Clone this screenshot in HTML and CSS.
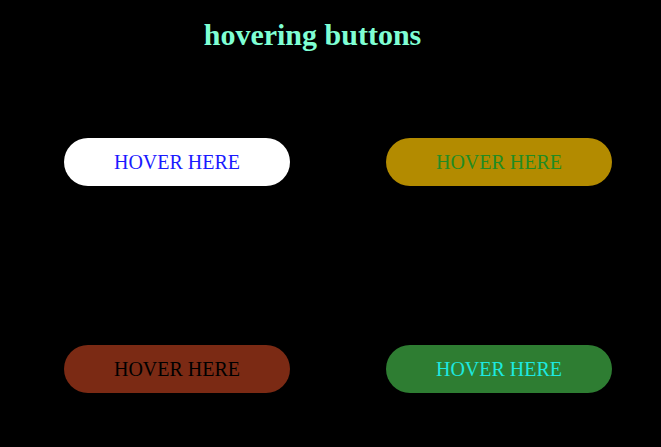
FILE: index.html
```html
<!DOCTYPE html>
<html>
<head>
<meta charset="utf-8">
<link rel="stylesheet" href="styles.css">
</head>
<body>
<h1 class="title">hovering buttons</h1>
<div class="grid">
  <button class="btn btn-white">HOVER HERE</button>
  <button class="btn btn-gold">HOVER HERE</button>
  <button class="btn btn-brown">HOVER HERE</button>
  <button class="btn btn-green">HOVER HERE</button>
</div>
</body>
</html>
```
FILE: styles.css
```css
html, body {
  margin: 0;
  padding: 0;
  background: #000;
  width: 661px;
  height: 447px;
  overflow: hidden;
  font-family: "Liberation Serif", serif;
}
.title {
  margin: 0;
  padding-top: 17px;
  width: 625px;
  text-align: center;
  color: #7fffd4;
  font-size: 30px;
  font-weight: bold;
  line-height: 36px;
}
.grid {
  display: grid;
  grid-template-columns: 226px 226px;
  grid-auto-rows: 48px;
  column-gap: 96px;
  row-gap: 159px;
  padding-left: 64px;
  margin-top: 85px;
}
.btn {
  border: none;
  border-radius: 24px;
  font-family: "Liberation Serif", serif;
  font-size: 20px;
  padding: 0;
  margin: 0;
  cursor: pointer;
}
.btn-white { background: #fff; color: #1a1aff; }
.btn-gold { background: #b38b00; color: #228b22; }
.btn-brown { background: #7b2a14; color: #000; }
.btn-green { background: #2e7d32; color: #1de9e0; }
```
